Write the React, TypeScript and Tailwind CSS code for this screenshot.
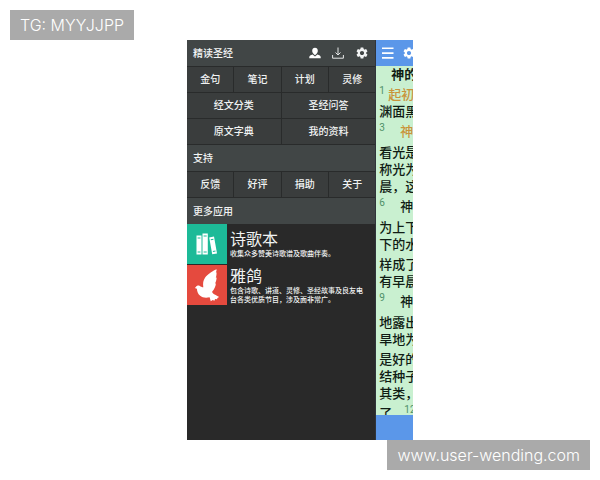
import { MdSettings } from 'react-icons/md'
import clsx from 'clsx'

type Verse = { num?: number; lines: string[]; marked?: boolean; lead?: boolean }

const verses: Verse[] = [
  { num: 1, lines: ['起初', '渊面黑'], marked: true },
  { num: 3, lines: ['神'], marked: true, lead: true },
  { lines: ['看光是', '称光为', '晨，这'] },
  { num: 6, lines: ['神'], lead: true },
  { lines: ['为上下', '下的水'] },
  { lines: ['样成了', '有早晨'] },
  { num: 9, lines: ['神'], lead: true },
  { lines: ['地露出', '旱地为'] },
  { lines: ['是好的', '结种子', '其类，'] },
]

const apps = [
  { name: '诗歌本', desc: '收集众多赞美诗歌谱及歌曲伴奏。', color: 'bg-[#1dba98]', icon: <BooksIcon /> },
  {
    name: '雅鸽',
    desc: '包含诗歌、讲道、灵修、圣经故事及良友电台各类优质节目，涉及面非常广。',
    color: 'bg-[#e54a3e]',
    icon: <DoveIcon />,
  },
]

function BooksIcon() {
  return (
    <svg viewBox="0 0 40 40" className="w-10 h-10" fill="#fff">
      <path fillRule="evenodd" d="M9.5 11.500h5v19h-5zM10.600 13.500v1h2.800v-1zM10.600 27.500v1h2.800v-1z" />
      <path fillRule="evenodd" d="M15.500 9.500h5.300v21h-5.300zM16.600 11.500v1h3.100v-1zM16.600 27.500v1h3.100v-1z" />
      <path fillRule="evenodd" d="M22.200 13.400l4.800-.9 3 16.900-4.800.9zM23.700 15.200l.2 1 2.600-.5-.2-1zM25.800 27.100l.2 1 2.600-.5-.2-1z" />
    </svg>
  )
}

function DoveIcon() {
  return (
    <svg viewBox="0 0 40 40" className="w-10 h-10" fill="#fff">
      <path d="M29.600 4.200C26.500 5.300 20.800 8.800 18 12.800c-1.900 2.800-2.200 5.700-1.700 9.400-1.500-.1-2.500-.8-3.500-1.300-1.500-.7-3.300-.2-3.900 1.200L7.800 23l2.100.7c.2 2.700 1 5 3 6.900 2.600 2.300 6.200 2.600 9.700 1.700l1.200 3.900 1.900-1.200 1.700.8.700-1.700 2 .2.300-1.400 1.700-.9-3.900-2.200c-1.600-.7-2.800-1.600-3.100-3 2.400-2.700 3.600-5.900 3.800-8.400l-.8.200c.9-2 1.500-4 1.500-6.100l-.8.300c.6-2 .9-3.800.7-5.600l-.7.400c.6-1.200.9-2.200.8-3.400z" />
    </svg>
  )
}

function UserIcon() {
  return (
    <svg viewBox="0 0 12 12" className="w-3 h-3" fill="#fff">
      <path d="M6 .8c1.700 0 2.800 1.300 2.800 3 0 1.300-.6 2.500-1.400 3.100L6 8.200 4.600 6.900C3.800 6.300 3.200 5.100 3.200 3.800c0-1.700 1.100-3 2.800-3z" />
      <path d="M3.600 7.600L6 9.600l2.400-2c2 .4 3.300 1.200 3.300 2.700v1H.3v-1c0-1.500 1.300-2.300 3.300-2.700z" />
    </svg>
  )
}

function DownloadIcon() {
  return (
    <svg viewBox="0 0 12 12" className="w-3 h-3" fill="none" stroke="#e5e7e7" strokeWidth="1">
      <path d="M6 .5v7.500M3.500 5.500L6 8l2.500-2.500M.6 8v3.200h10.800V8" />
    </svg>
  )
}

function MenuIcon() {
  return (
    <svg viewBox="0 0 12 12" className="w-3 h-3" fill="#fff">
      <path d="M0 .4h11.500v1.700H0zM0 5.200h11.500v1.700H0zM0 10h11.500v1.700H0z" />
    </svg>
  )
}

function MenuRow({ items, cols }: { items: string[]; cols: string }) {
  return (
    <div className={clsx('grid gap-px bg-[#292b2b] border-t border-[#292b2b]', cols)}>
      {items.map((item) => (
        <button key={item} className="h-[25px] bg-[#3a3d3d] text-[10px] font-medium">
          {item}
        </button>
      ))}
    </div>
  )
}

function SectionTitle({ children }: { children: string }) {
  return (
    <h2 className="h-[27px] px-1.5 flex items-center border-t border-[#292b2b] bg-[#414646] text-[10px] font-medium">
      {children}
    </h2>
  )
}

function Drawer() {
  return (
    <aside className="w-5/6 shrink-0 bg-[#292929] text-[#f1f3f3]">
      <header className="h-[26px] px-1.5 flex items-center justify-between bg-[#414646]">
        <h1 className="text-[10px] font-medium">精读圣经</h1>
        <div className="flex items-center gap-[11px]">
          <button aria-label="用户"><UserIcon /></button>
          <button aria-label="下载"><DownloadIcon /></button>
          <button aria-label="设置"><MdSettings className="w-[14px] h-[14px]" /></button>
        </div>
      </header>
      <MenuRow items={['金句', '笔记', '计划', '灵修']} cols="grid-cols-4" />
      <MenuRow items={['经文分类', '圣经问答']} cols="grid-cols-2" />
      <MenuRow items={['原文字典', '我的资料']} cols="grid-cols-2" />
      <SectionTitle>支持</SectionTitle>
      <MenuRow items={['反馈', '好评', '捐助', '关于']} cols="grid-cols-4" />
      <SectionTitle>更多应用</SectionTitle>
      <ul className="flex flex-col gap-px">
        {apps.map((app) => (
          <li key={app.name} className="flex gap-[3px]">
            <div className={clsx('w-10 h-10 shrink-0', app.color)}>{app.icon}</div>
            <div className="min-h-10 pr-2 flex flex-col justify-center">
              <h3 className="text-[16px] leading-[21px]">{app.name}</h3>
              <p className="text-[7px] leading-[9px] font-medium">{app.desc}</p>
            </div>
          </li>
        ))}
      </ul>
    </aside>
  )
}

function Reader() {
  return (
    <section className="flex-1 min-w-0 flex flex-col overflow-hidden whitespace-nowrap bg-[#c9f0d0] border-l border-[#30343a] text-[#101c14]">
      <header className="h-[26px] pl-1.5 shrink-0 flex items-center gap-2 bg-[#5b97e9] text-white">
        <button aria-label="菜单" className="shrink-0"><MenuIcon /></button>
        <button aria-label="设置" className="shrink-0"><MdSettings className="w-[14px] h-[14px]" /></button>
      </header>
      <div className="h-0 grow overflow-hidden pl-[3px] text-[13px] leading-[17px] font-medium">
        <h2 className="pl-3 pb-[3px] font-bold">神的</h2>
        {verses.map((v, i) => (
          <p key={i} className={v.lead ? 'pb-1' : 'pb-[3px]'}>
            {v.lines.map((line, j) => (
              <span key={line} className="flex">
                {j === 0 && v.num && (
                  <sup
                    className={clsx(
                      'top-0 shrink-0 text-[10px] leading-[10px] font-normal text-[#4f9068]',
                      v.lead ? 'w-[21px]' : 'w-[9px]',
                    )}
                  >
                    {v.num}
                  </sup>
                )}
                <span className={clsx(j === 0 && v.marked && 'text-[#c9933a]')}>{line}</span>
              </span>
            ))}
          </p>
        ))}
        <p className="flex">
          <span className="w-[25px] shrink-0">了</span>
          <sup className="top-0 text-[10px] leading-[10px] font-normal text-[#4f9068]">12</sup>
        </p>
      </div>
      <footer className="h-[25px] shrink-0 bg-[#5b97e9]" />
    </section>
  )
}

function Tag({ children }: { children: string }) {
  return (
    <span className="h-[30px] px-[10px] flex items-center bg-[#aaaaaa] text-white text-[16px] font-light font-['Inter','Liberation_Sans',sans-serif]">
      {children}
    </span>
  )
}

export default function App() {
  return (
    <div className="min-h-screen flex flex-col bg-white font-['Roboto','Noto_Sans_CJK_SC',sans-serif]">
      <div className="pt-[10px] px-[10px] flex">
        <Tag>TG: MYYJJPP</Tag>
      </div>
      <main className="flex-1 w-3/8 min-w-[226px] mx-auto flex">
        <Drawer />
        <Reader />
      </main>
      <div className="pb-[10px] px-[10px] flex justify-end">
        <Tag>www.user-wending.com</Tag>
      </div>
    </div>
  )
}
